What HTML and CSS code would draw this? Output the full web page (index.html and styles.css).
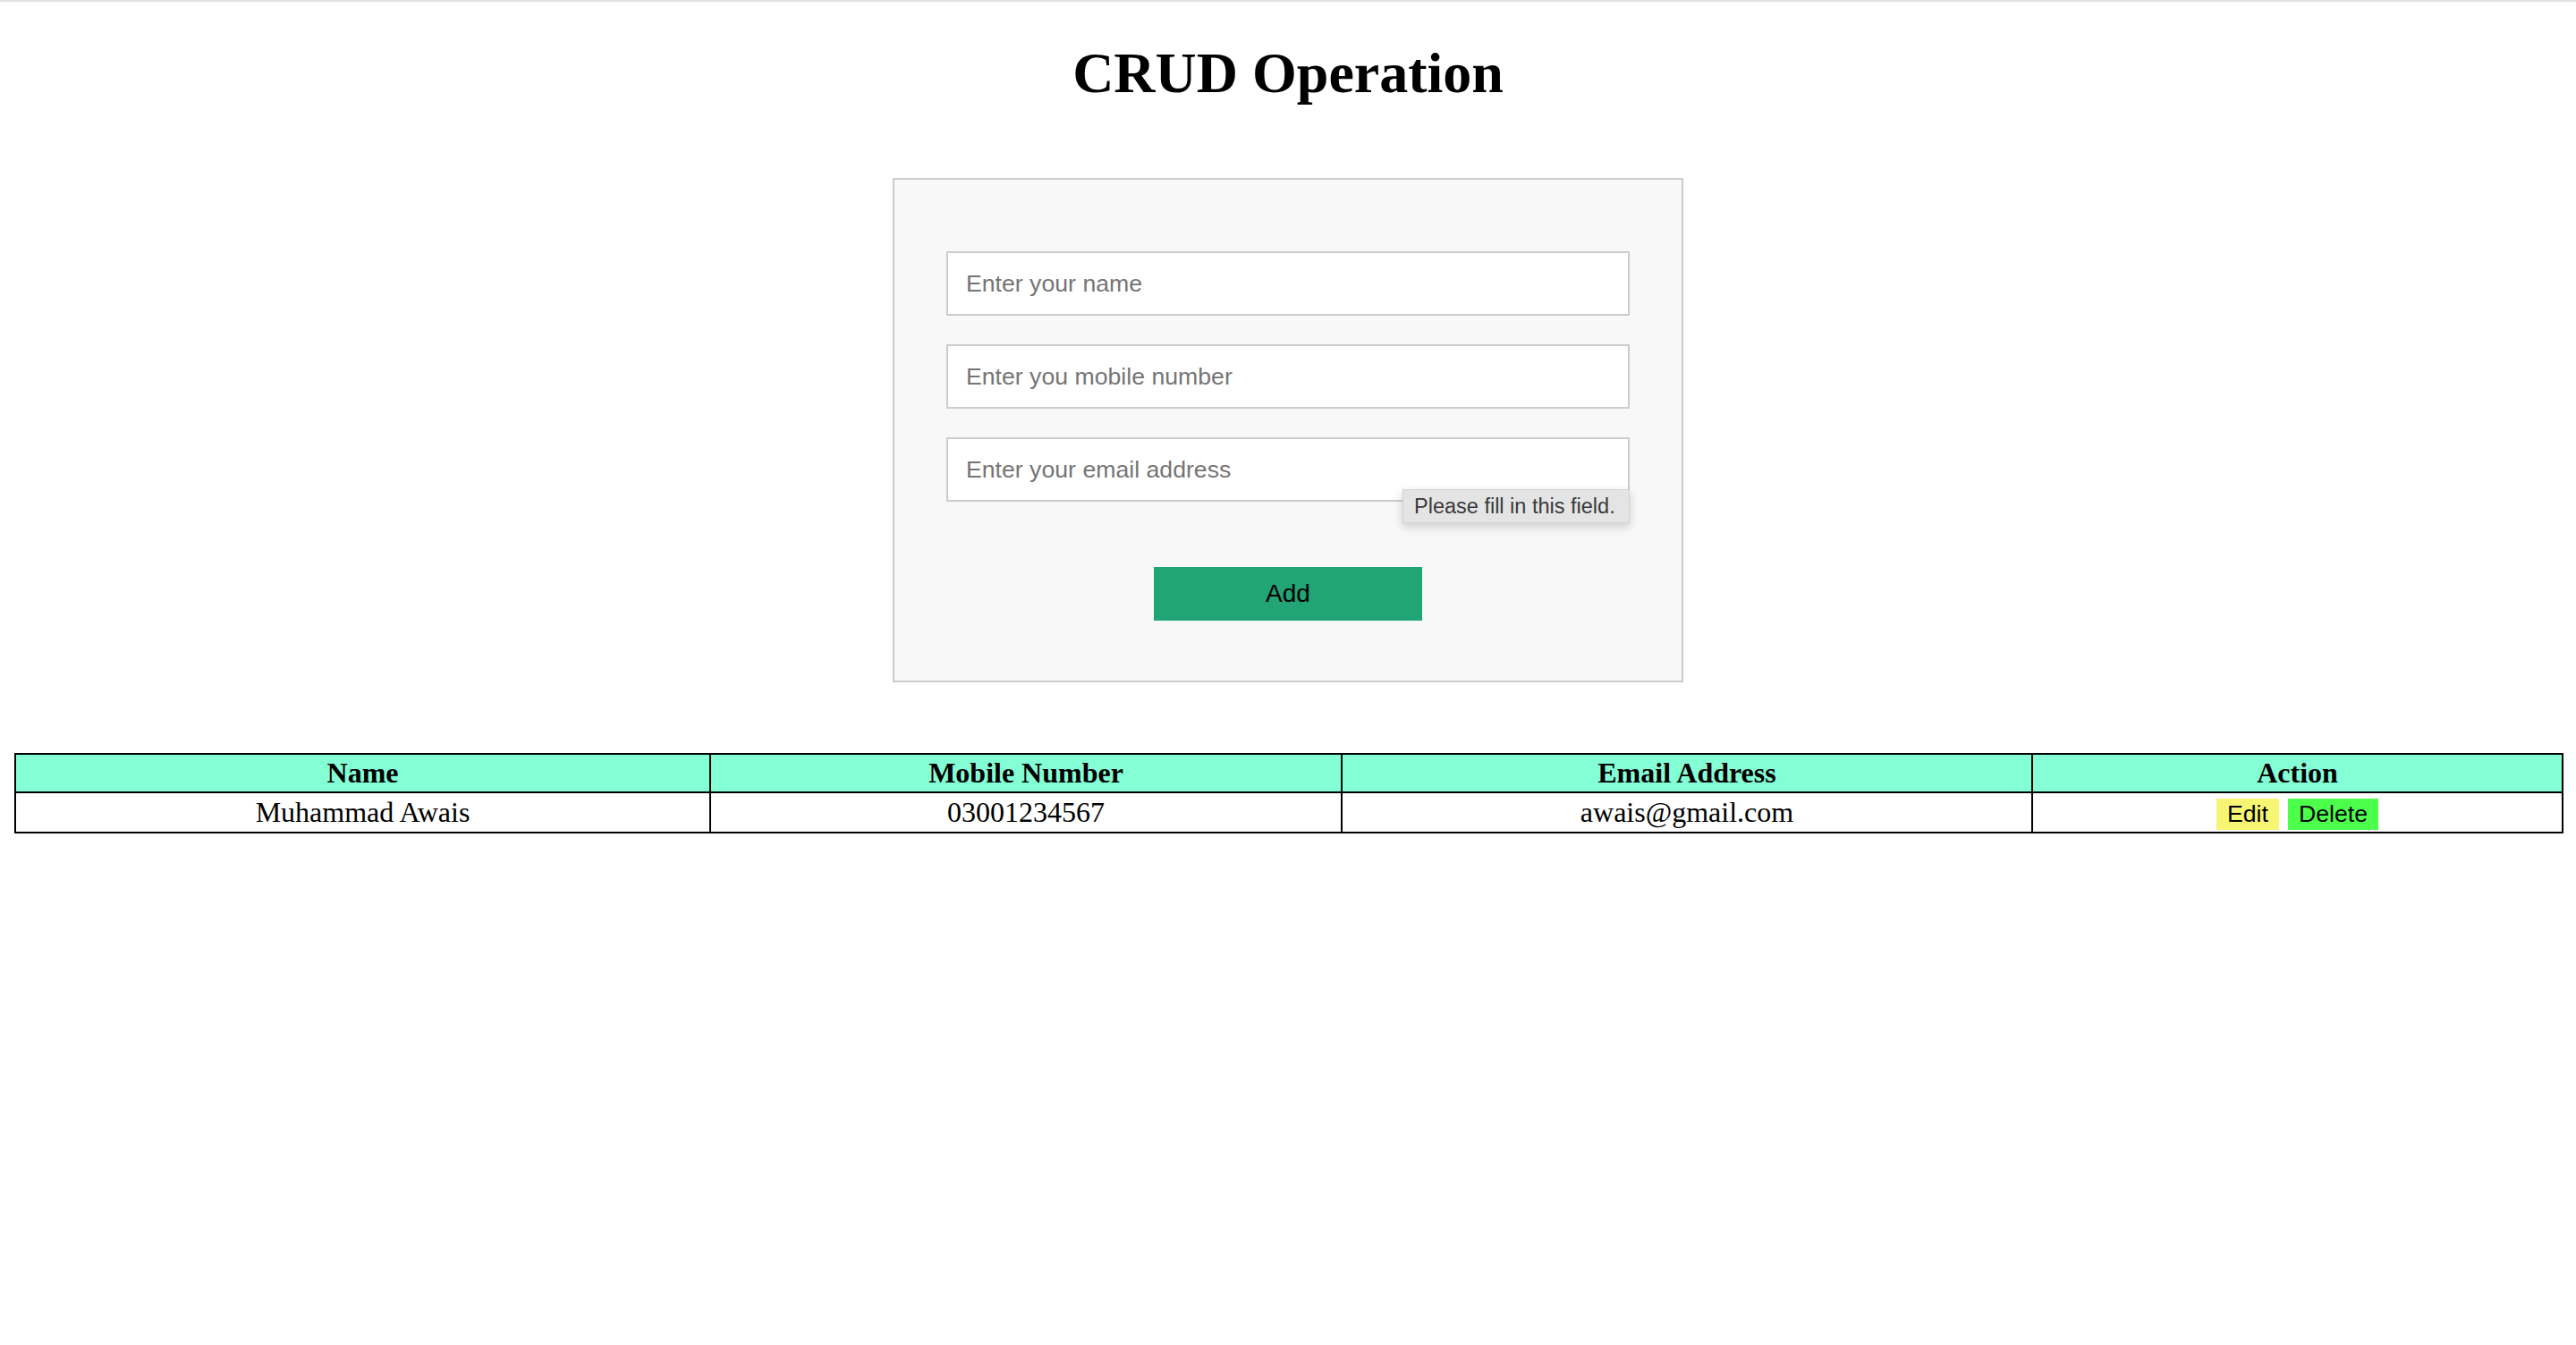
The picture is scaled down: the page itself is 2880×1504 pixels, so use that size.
FILE: index.html
```html
<!DOCTYPE html>
<html lang="en">
<head>
<meta charset="utf-8">
<title>CRUD Operation</title>
<link rel="stylesheet" href="styles.css">
</head>
<body>
<div class="chrome-line"></div>
<main class="page">
  <h1 class="title">CRUD Operation</h1>
  <form class="card">
    <div class="fields">
      <input class="field" type="text" placeholder="Enter your name">
      <input class="field" type="text" placeholder="Enter you mobile number">
      <div class="field-wrap">
        <input class="field" type="email" placeholder="Enter your email address">
        <div class="bubble">Please fill in this field.</div>
      </div>
    </div>
    <div class="actions">
      <button class="add-btn" type="button">Add</button>
    </div>
  </form>
  <table class="grid">
    <colgroup>
      <col class="c1"><col class="c2"><col class="c3"><col class="c4">
    </colgroup>
    <thead>
      <tr><th>Name</th><th>Mobile Number</th><th>Email Address</th><th>Action</th></tr>
    </thead>
    <tbody>
      <tr>
        <td>Muhammad Awais</td>
        <td>03001234567</td>
        <td>awais@gmail.com</td>
        <td class="action-cell"><button class="btn edit" type="button">Edit</button><button class="btn delete" type="button">Delete</button></td>
      </tr>
    </tbody>
  </table>
</main>
</body>
</html>
```
FILE: styles.css
```css
html, body {
  margin: 0;
  padding: 0;
  background: #ffffff;
}
body {
  font-family: "Liberation Serif", "Times New Roman", serif;
  color: #000;
}
.chrome-line {
  height: 2px;
  background: #e0e0e0;
}
.page {
  padding: 0 16px;
}
.title {
  margin: 43px 0 0;
  font-size: 64px;
  line-height: 74px;
  font-weight: bold;
  text-align: center;
}
.card {
  box-sizing: border-box;
  width: 884px;
  margin: 80px auto 0;
  padding: 80px 58px 67px;
  background: #f8f8f8;
  border: 2px solid #cccccc;
}
.fields {
  display: flex;
  flex-direction: column;
  gap: 32px;
}
.field-wrap {
  position: relative;
}
.field {
  display: block;
  box-sizing: border-box;
  width: 100%;
  height: 72px;
  margin: 0;
  padding: 0 20px;
  border: 2px solid #cccccc;
  background: #ffffff;
  font-family: "Liberation Sans", Arial, sans-serif;
  font-size: 26.67px;
  color: #333;
  outline: none;
}
.field::placeholder {
  color: #757575;
}
.bubble {
  position: absolute;
  right: 0;
  top: 58px;
  box-sizing: border-box;
  width: 254px;
  height: 38px;
  padding: 0 12px;
  background: #e4e4e4;
  border: 1px solid #d4d4d4;
  box-shadow: 0 4px 10px rgba(0, 0, 0, 0.18);
  font-family: "Liberation Sans", Arial, sans-serif;
  font-size: 23.5px;
  line-height: 36px;
  color: #3a3a3a;
  white-space: nowrap;
}
.actions {
  display: flex;
  justify-content: center;
  margin-top: 73px;
}
.add-btn {
  width: 300px;
  height: 60px;
  border: none;
  padding: 0;
  background: #21a476;
  font-family: "Liberation Sans", Arial, sans-serif;
  font-size: 28px;
  color: #000;
}
.grid {
  width: 100%;
  margin-top: 79px;
  border-collapse: collapse;
  table-layout: fixed;
  font-size: 32px;
}
.c1 { width: 777px; }
.c2 { width: 706px; }
.c3 { width: 772px; }
.c4 { width: 593px; }
.grid th,
.grid td {
  border: 2px solid #000;
  padding: 2px;
  text-align: center;
  line-height: 37px;
}
.grid thead tr {
  background: #84ffd5;
}
.grid th {
  font-weight: bold;
}
.btn {
  height: 35px;
  border: none;
  padding: 0 12px;
  margin: 0;
  vertical-align: middle;
  font-family: "Liberation Sans", Arial, sans-serif;
  font-size: 26.67px;
  line-height: 35px;
  color: #000;
}
.edit {
  background: #f7f572;
  margin-right: 10px;
}
.delete {
  background: #4bff4b;
}
```
